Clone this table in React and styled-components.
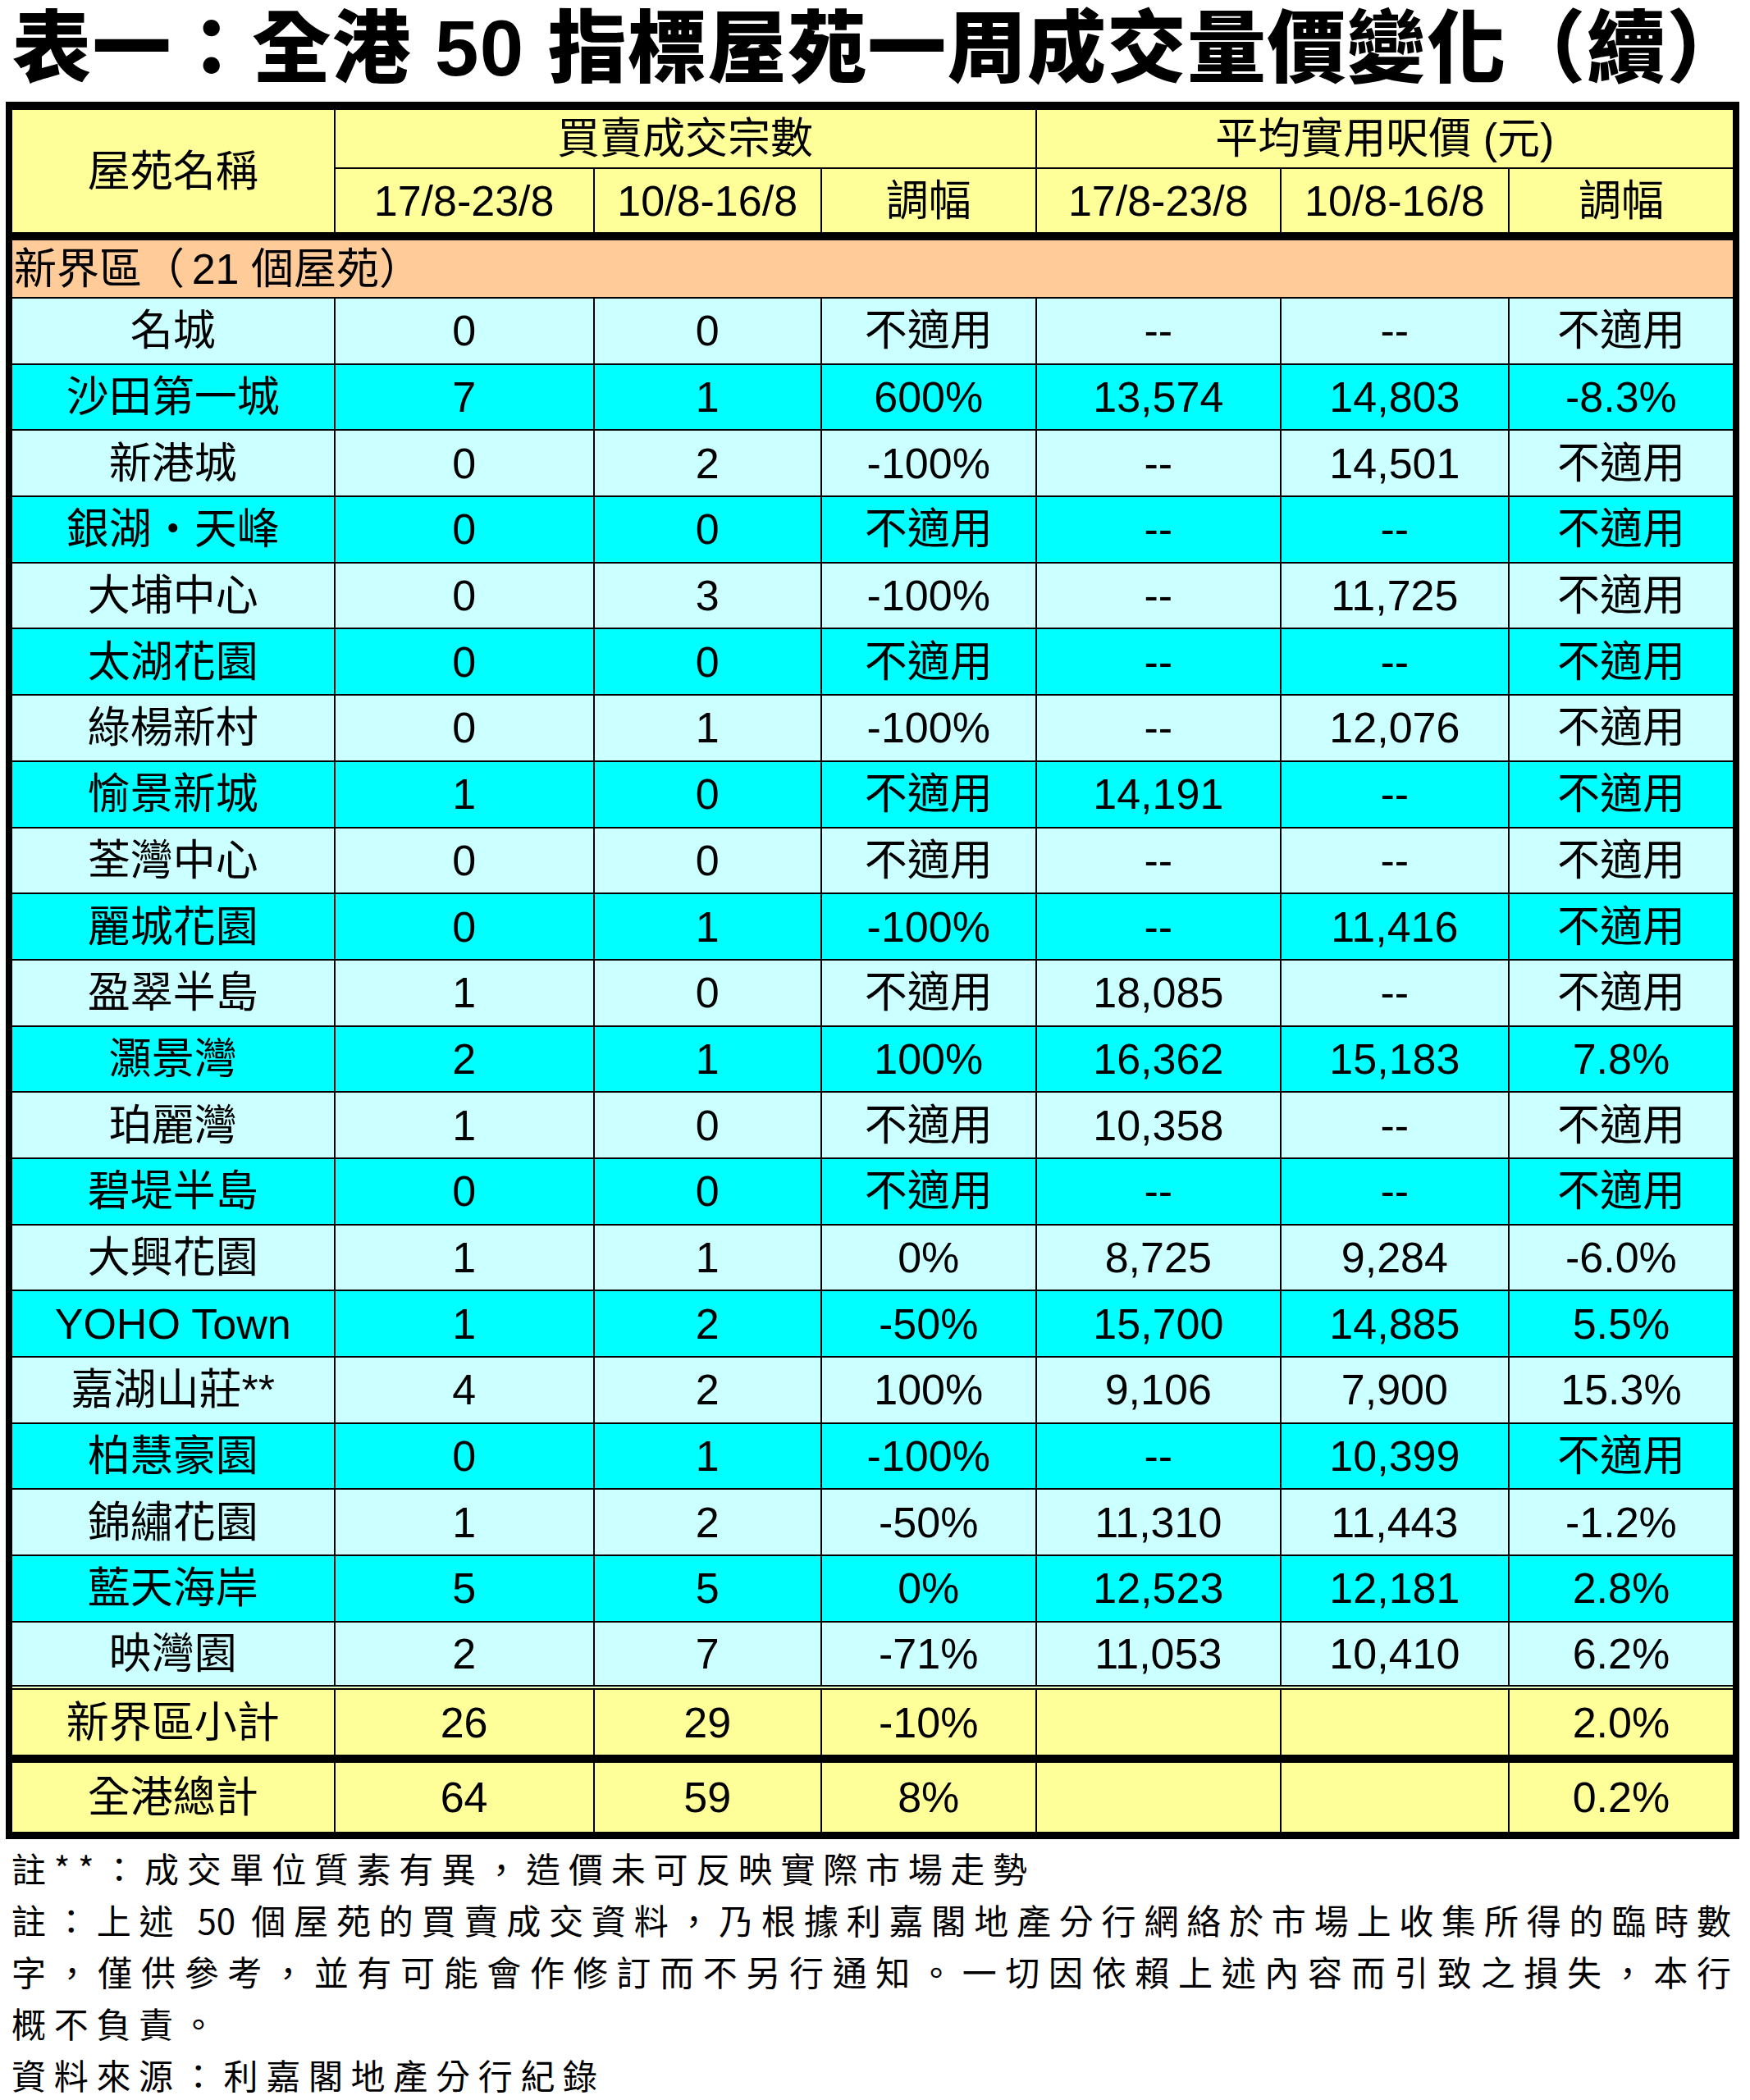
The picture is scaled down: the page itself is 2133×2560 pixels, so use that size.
import React from "react";
import styled, { createGlobalStyle } from "styled-components";

const GlobalStyle = createGlobalStyle`
  html, body {
    margin: 0;
    padding: 0;
    background: #ffffff;
  }
  body {
    font-family: "Liberation Sans", "Noto Sans CJK TC", sans-serif;
    color: #000000;
  }
`;

const Page = styled.div`
  width: 2133px;
  padding: 0 0 0 7px;
  box-sizing: border-box;
`;

const Title = styled.h1`
  margin: 0 0 14px 0;
  padding: 7px 0 0 8px;
  font-family: "Liberation Sans", "Noto Sans CJK TC", sans-serif;
  font-weight: 900;
  font-size: 96px;
  line-height: 103px;
  letter-spacing: 1.4px;
  white-space: nowrap;
`;

const Sheet = styled.table`
  width: 2113px;
  table-layout: fixed;
  border-collapse: collapse;
  border-style: solid;
  border-color: #000;
  border-width: 10px 8px 9px 8px;
  font-family: "Liberation Sans", "Noto Sans CJK TC", sans-serif;
  font-size: 52px;
`;

const HeadRow = styled.tr`
  height: ${(p) => p.$h}px;
`;

const HeadCell = styled.th`
  background: #ffff99;
  border: 2px solid #000;
  border-bottom-width: ${(p) => (p.$last ? "10px" : "2px")};
  font-weight: 400;
  text-align: center;
  padding: 0;
  line-height: 1;
  white-space: nowrap;
`;

const RegionRow = styled.tr`
  height: 75px;
`;

const RegionCell = styled.td`
  background: #ffcc99;
  border: 2px solid #000;
  border-top: 10px solid #000;
  text-align: left;
  padding: 0 0 0 2px;
  line-height: 1;
`;

const tones = {
  light: "#ccffff",
  cyan: "#00ffff",
  sum: "#ffff99",
};

const Row = styled.tr`
  height: ${(p) => p.$h}px;
  background: ${(p) => tones[p.$tone]};
`;

const Cell = styled.td`
  border: 2px solid #000;
  border-top: ${(p) => p.$top || "2px solid #000"};
  text-align: center;
  padding: 0;
  line-height: 1;
  white-space: nowrap;
`;

const Notes = styled.div`
  width: 2096px;
  margin: 3px 0 0 7px;
  font-family: "Noto Sans CJK TC", sans-serif;
  font-size: 42px;
  line-height: 63px;
  letter-spacing: 9.7px;
`;

const NoteLine = styled.div`
  white-space: nowrap;
  text-align: ${(p) => (p.$justify ? "justify" : "left")};
  text-align-last: ${(p) => (p.$justify ? "justify" : "auto")};
  letter-spacing: ${(p) => (p.$justify ? "0" : "inherit")};
`;

const COLS = [395, 315, 276, 261, 297, 277, 276];

const estates = [
  ["名城", "0", "0", "不適用", "--", "--", "不適用"],
  ["沙田第一城", "7", "1", "600%", "13,574", "14,803", "-8.3%"],
  ["新港城", "0", "2", "-100%", "--", "14,501", "不適用"],
  ["銀湖・天峰", "0", "0", "不適用", "--", "--", "不適用"],
  ["大埔中心", "0", "3", "-100%", "--", "11,725", "不適用"],
  ["太湖花園", "0", "0", "不適用", "--", "--", "不適用"],
  ["綠楊新村", "0", "1", "-100%", "--", "12,076", "不適用"],
  ["愉景新城", "1", "0", "不適用", "14,191", "--", "不適用"],
  ["荃灣中心", "0", "0", "不適用", "--", "--", "不適用"],
  ["麗城花園", "0", "1", "-100%", "--", "11,416", "不適用"],
  ["盈翠半島", "1", "0", "不適用", "18,085", "--", "不適用"],
  ["灝景灣", "2", "1", "100%", "16,362", "15,183", "7.8%"],
  ["珀麗灣", "1", "0", "不適用", "10,358", "--", "不適用"],
  ["碧堤半島", "0", "0", "不適用", "--", "--", "不適用"],
  ["大興花園", "1", "1", "0%", "8,725", "9,284", "-6.0%"],
  ["YOHO Town", "1", "2", "-50%", "15,700", "14,885", "5.5%"],
  ["嘉湖山莊**", "4", "2", "100%", "9,106", "7,900", "15.3%"],
  ["柏慧豪園", "0", "1", "-100%", "--", "10,399", "不適用"],
  ["錦繡花園", "1", "2", "-50%", "11,310", "11,443", "-1.2%"],
  ["藍天海岸", "5", "5", "0%", "12,523", "12,181", "2.8%"],
  ["映灣園", "2", "7", "-71%", "11,053", "10,410", "6.2%"],
];

const totals = [
  { cells: ["新界區小計", "26", "29", "-10%", "", "", "2.0%"], top: "6px double #000", h: 87 },
  { cells: ["全港總計", "64", "59", "8%", "", "", "0.2%"], top: "10px solid #000", h: 93 },
];

export default function App() {
  return (
    <Page>
      <GlobalStyle />
      <Title>表一：全港 50 指標屋苑一周成交量價變化（續）</Title>
      <Sheet>
        <colgroup>
          {COLS.map((w, i) => (
            <col key={i} style={{ width: w }} />
          ))}
        </colgroup>
        <thead>
          <HeadRow $h={76}>
            <HeadCell rowSpan={2} $last>
              屋苑名稱
            </HeadCell>
            <HeadCell colSpan={3}>買賣成交宗數</HeadCell>
            <HeadCell colSpan={3}>平均實用呎價 (元)</HeadCell>
          </HeadRow>
          <HeadRow $h={83}>
            <HeadCell $last>17/8-23/8</HeadCell>
            <HeadCell $last>10/8-16/8</HeadCell>
            <HeadCell $last>調幅</HeadCell>
            <HeadCell $last>17/8-23/8</HeadCell>
            <HeadCell $last>10/8-16/8</HeadCell>
            <HeadCell $last>調幅</HeadCell>
          </HeadRow>
        </thead>
        <tbody>
          <RegionRow>
            <RegionCell colSpan={7}>新界區（{"\u2006"}21 個屋苑）</RegionCell>
          </RegionRow>
          {estates.map((r, i) => (
            <Row key={r[0]} $h={80.7} $tone={i % 2 === 0 ? "light" : "cyan"}>
              {r.map((v, j) => (
                <Cell key={j}>{v}</Cell>
              ))}
            </Row>
          ))}
          {totals.map((t) => (
            <Row key={t.cells[0]} $h={t.h} $tone="sum">
              {t.cells.map((v, j) => (
                <Cell key={j} $top={t.top}>
                  {v}
                </Cell>
              ))}
            </Row>
          ))}
        </tbody>
      </Sheet>
      <Notes>
        <NoteLine>註**：成交單位質素有異，造價未可反映實際市場走勢</NoteLine>
        <NoteLine $justify>
          註：上述 50 個屋苑的買賣成交資料，乃根據利嘉閣地產分行網絡於市場上收集所得的臨時數
        </NoteLine>
        <NoteLine $justify>
          字，僅供參考，並有可能會作修訂而不另行通知。一切因依賴上述內容而引致之損失，本行
        </NoteLine>
        <NoteLine>概不負責。</NoteLine>
        <NoteLine>資料來源：利嘉閣地產分行紀錄</NoteLine>
      </Notes>
    </Page>
  );
}
